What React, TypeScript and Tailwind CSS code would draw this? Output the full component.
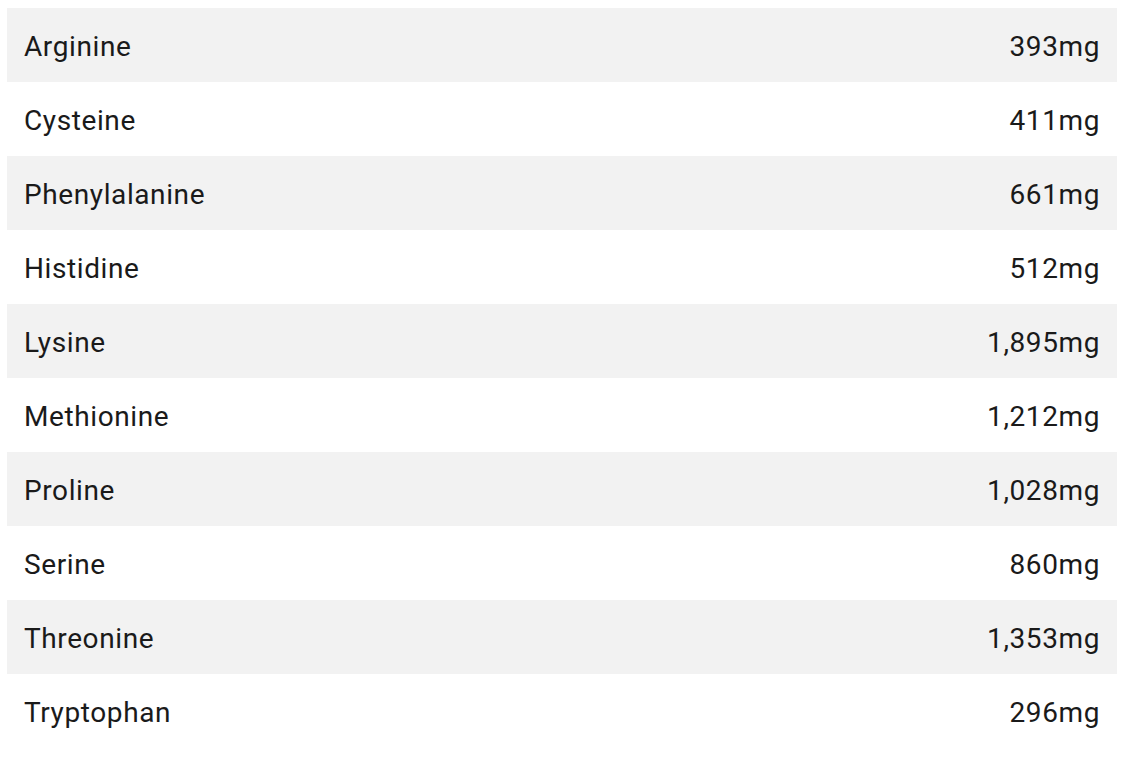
const rows: [string, string][] = [
  ['Arginine', '393mg'],
  ['Cysteine', '411mg'],
  ['Phenylalanine', '661mg'],
  ['Histidine', '512mg'],
  ['Lysine', '1,895mg'],
  ['Methionine', '1,212mg'],
  ['Proline', '1,028mg'],
  ['Serine', '860mg'],
  ['Threonine', '1,353mg'],
  ['Tryptophan', '296mg'],
];

export default function App() {
  return (
    <div className="min-h-screen bg-white pt-[8px] pl-[7px]">
      <div className="w-[1110px]">
        {rows.map(([name, amount], i) => (
          <div
            key={name}
            className={`flex h-[74px] items-center justify-between px-[17px] pt-[4px] text-[28px] leading-none tracking-[0.6px] text-[#1a1a1a] font-['Roboto',sans-serif] ${
              i % 2 === 0 ? 'bg-[#f2f2f2]' : 'bg-white'
            }`}
          >
            <span>{name}</span>
            <span>{amount}</span>
          </div>
        ))}
      </div>
    </div>
  );
}
